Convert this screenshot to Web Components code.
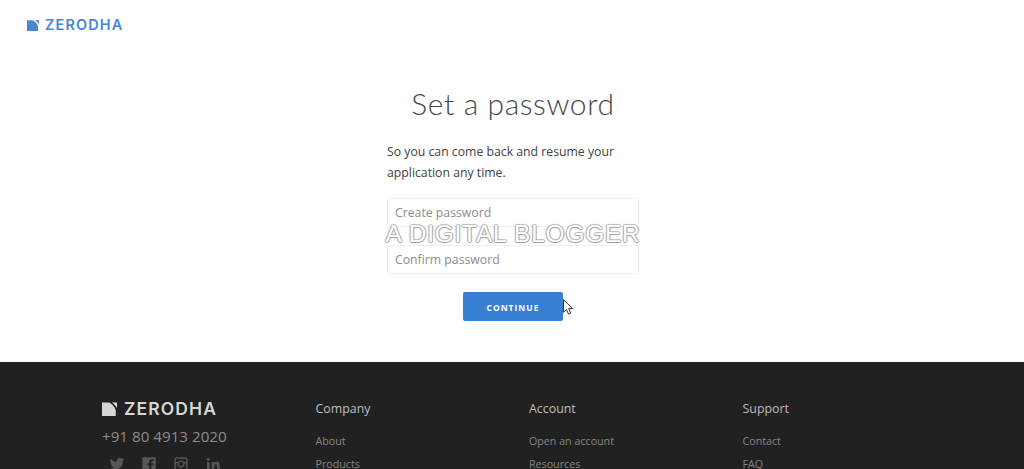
<!DOCTYPE html>
<html>
<head>
<meta charset="utf-8">
<title>Set a password</title>
<style>
  html, body { margin: 0; padding: 0; height: 469px; overflow: hidden; background: #fff; }
  body { font-family: "Open Sans", sans-serif; }
</style>
</head>
<body>
<signup-page></signup-page>

<script>
// Logo mark + wordmark, colour comes from the host
class ZLogo extends HTMLElement {
  constructor() {
    super();
    this.attachShadow({ mode: 'open' });
    this.shadowRoot.innerHTML = `
      <style>
        :host { display: inline-flex; align-items: center; gap: var(--logo-gap, 6px); color: var(--logo-color, #4a86d0); }
        svg { width: var(--mark, 12px); height: var(--mark, 12px); display: block; fill: currentColor; }
        span {
          font: 600 var(--logo-size, 14.5px)/1 Inter, sans-serif;
          letter-spacing: var(--logo-spacing, 1.1px);
        }
      </style>
      <svg viewBox="0 0 12 12"><path d="M0 1.200h5.600C8.600 2.600 10.400 5 11 7.600V12H0z"/><path d="M8 1.200h4v4.600C11 3.900 9.700 2.400 8 1.200z"/></svg>
      <span>ZERODHA</span>`;
  }
}

class SiteHeader extends HTMLElement {
  constructor() {
    super();
    this.attachShadow({ mode: 'open' });
    this.shadowRoot.innerHTML = `
      <style>
        :host { display: block; height: 48px; padding: 14px 0 0 27px; box-sizing: border-box; }
      </style>
      <z-logo></z-logo>`;
  }
}

class TextField extends HTMLElement {
  constructor() {
    super();
    this.attachShadow({ mode: 'open' });
    this.shadowRoot.innerHTML = `
      <style>
        :host {
          display: flex; align-items: center; box-sizing: border-box;
          height: 29px; padding-left: 7px;
          border: 1px solid #eeeeee; border-radius: 2px;
          font-size: 12.25px; color: #8c8c8c;
        }
      </style>
      <slot></slot>`;
  }
}

class PasswordForm extends HTMLElement {
  constructor() {
    super();
    this.attachShadow({ mode: 'open' });
    this.shadowRoot.innerHTML = `
      <style>
        :host { display: block; width: 252px; margin: 0 auto; position: relative; left: 1px; }
        h1 {
          margin: 0; text-align: center; white-space: nowrap;
          font: 300 30px/40px Lato, sans-serif; color: #484848; letter-spacing: .6px;
        }
        p { margin: 18px 0 0; font-size: 12.25px; line-height: 21px; color: #424242; }
        .fields { margin-top: 15px; display: flex; flex-direction: column; gap: 18px; }
        .row { display: flex; justify-content: center; margin-top: 18px; }
        button {
          width: 100px; height: 29px; border: 0; border-radius: 2px; padding: 1px 0 0;
          background: #387ed1; color: #fff;
          font: 700 8.5px "Open Sans", sans-serif; letter-spacing: 1px;
        }
        .mark {
          position: absolute; left: -4px; top: 136px; width: 260px;
          white-space: nowrap; text-align: center;
          font: 400 24.5px/30px "Liberation Sans", sans-serif; letter-spacing: .75px; color: #fff;
          text-shadow: -1px 0 1px #a8a8a8, 1px 0 1px #a0a0a0, 0 1px 1px #989898, 0 -1px 1px #bcbcbc;
        }
        .cursor { position: absolute; left: 176px; top: 216px; width: 11px; height: 17px; }
      </style>
      <h1>Set a password</h1>
      <p>So you can come back and resume your<br>application any time.</p>
      <div class="fields">
        <text-field>Create password</text-field>
        <text-field>Confirm password</text-field>
      </div>
      <div class="row"><button>CONTINUE</button></div>
      <div class="mark">A DIGITAL BLOGGER</div>
      <svg class="cursor" viewBox="0 0 11 17"><path d="M.5.800v12.400l3-2.700 2 4.600 2.200-1-2-4.500h4z" fill="#fff" stroke="#333" stroke-width="1"/></svg>`;
  }
}

class FooterColumn extends HTMLElement {
  constructor() {
    super();
    this.attachShadow({ mode: 'open' });
    this.shadowRoot.innerHTML = `
      <style>
        :host { display: block; }
        h4 { margin: 0 0 11px; font-size: 12.4px; line-height: 20px; font-weight: 500; color: #bdbdbd; }
        ::slotted(a) { display: block; font-size: 10.7px; line-height: 23px; color: #858585; }
      </style>
      <h4></h4>
      <slot></slot>`;
    this.shadowRoot.querySelector('h4').textContent = this.getAttribute('title');
  }
}

class SiteFooter extends HTMLElement {
  constructor() {
    super();
    this.attachShadow({ mode: 'open' });
    this.shadowRoot.innerHTML = `
      <style>
        :host { display: block; height: 107px; overflow: hidden; background: #212121; box-sizing: border-box; padding: 37px 0 0 102px; }
        .cols { display: grid; grid-template-columns: repeat(4, 213.5px); }
        z-logo { --logo-color: #d6d6d6; --mark: 15px; --logo-size: 17.5px; --logo-spacing: 1.1px; --logo-gap: 7px; }
        .phone { margin-top: 4px; font-size: 15.2px; line-height: 22px; color: #8b8b8b; }
        .social { margin-top: 9px; padding-left: 7px; display: flex; gap: 16px; }
        .social svg { width: 16px; height: 16px; fill: #565656; display: block; }
      </style>
      <div class="cols">
        <div>
          <z-logo></z-logo>
          <div class="phone">+91 80 4913 2020</div>
          <div class="social">
            <svg viewBox="0 0 24 24"><path d="M23 5c-.8.400-1.700.600-2.600.700.900-.600 1.600-1.400 2-2.500-.9.500-1.900.900-2.900 1.100a4.600 4.600 0 0 0-7.800 4.200C7.900 8.300 4.500 6.500 2.300 3.700c-1.200 2.100-.6 4.800 1.400 6.100-.7 0-1.400-.2-2-.6 0 2.200 1.500 4.200 3.700 4.600-.7.200-1.400.2-2.100.1.600 1.900 2.300 3.200 4.300 3.200A9.300 9.300 0 0 1 .8 19a13 13 0 0 0 20-11.600C21.700 6.800 22.400 6 23 5z"/></svg>
            <svg viewBox="0 0 24 24"><path d="M2 2h20v20h-6.500v-8h2.700l.4-3h-3.100V9c0-.9.300-1.500 1.500-1.500h1.700V4.800c-.3 0-1.300-.1-2.400-.1-2.400 0-4 1.500-4 4.100V11H9.600v3h2.700v8H2z"/></svg>
            <svg viewBox="0 0 24 24"><path fill-rule="evenodd" d="M6 2h12a4 4 0 0 1 4 4v12a4 4 0 0 1-4 4H6a4 4 0 0 1-4-4V6a4 4 0 0 1 4-4zm0 2.200A1.800 1.800 0 0 0 4.200 6v3h3.200a5.500 5.500 0 0 1 9.200 0h3.200V6A1.800 1.800 0 0 0 18 4.200zM12 8.500a3.500 3.500 0 1 0 0 7 3.500 3.500 0 0 0 0-7zM4.200 11v7c0 1 .8 1.800 1.800 1.800h12c1 0 1.800-.8 1.800-1.800v-7h-2.400a5.500 5.500 0 1 1-10.800 0z"/></svg>
            <svg viewBox="0 0 24 24"><path d="M3 9h4v12H3zM5 3a2.200 2.200 0 1 1 0 4.400A2.200 2.200 0 0 1 5 3zM10 9h3.800v1.700c.6-1 1.900-2 3.800-2 4 0 4.400 2.600 4.400 6V21h-4v-5.600c0-1.400 0-3.100-1.900-3.100s-2.100 1.500-2.100 3V21h-4z"/></svg>
          </div>
        </div>
        <footer-column title="Company"><a>About</a><a>Products</a></footer-column>
        <footer-column title="Account"><a>Open an account</a><a>Resources</a></footer-column>
        <footer-column title="Support"><a>Contact</a><a>FAQ</a></footer-column>
      </div>`;
  }
}

class SignupPage extends HTMLElement {
  constructor() {
    super();
    this.attachShadow({ mode: 'open' });
    this.shadowRoot.innerHTML = `
      <style>
        :host { display: block; height: 469px; overflow: hidden; }
        main { height: 314px; box-sizing: border-box; padding-top: 35px; }
      </style>
      <site-header></site-header>
      <main><password-form></password-form></main>
      <site-footer></site-footer>`;
  }
}

customElements.define('z-logo', ZLogo);
customElements.define('site-header', SiteHeader);
customElements.define('text-field', TextField);
customElements.define('password-form', PasswordForm);
customElements.define('footer-column', FooterColumn);
customElements.define('site-footer', SiteFooter);
customElements.define('signup-page', SignupPage);
</script>
</body>
</html>
